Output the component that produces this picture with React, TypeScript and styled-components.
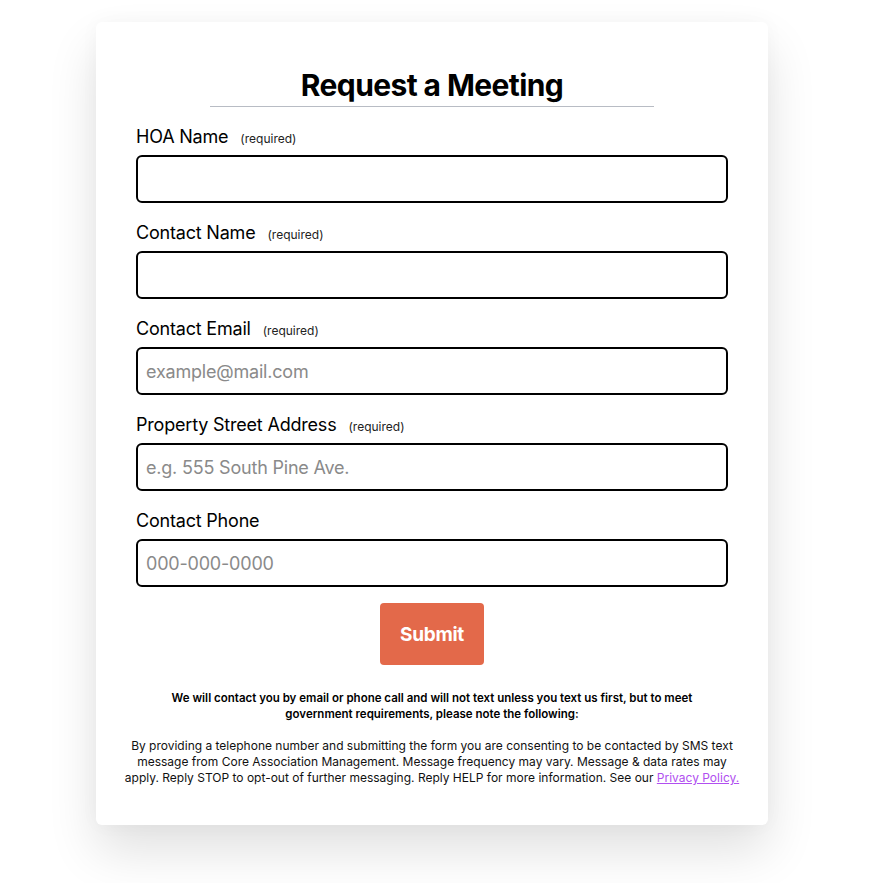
import React from "react";
import styled, { createGlobalStyle } from "styled-components";

const Global = createGlobalStyle`
  html, body { margin: 0; padding: 0; background: #ffffff; }
  body { font-family: Inter, "Noto Sans", Arial, sans-serif; color: #000; }
  * { box-sizing: border-box; }
`;

const Page = styled.div`
  min-height: 883px;
  padding: 22px 0 0 96px;
`;

const Card = styled.form`
  width: 672px;
  background: #fff;
  border-radius: 6px;
  box-shadow: 0 26px 50px rgba(0, 0, 0, 0.12), 0 0 20px rgba(0, 0, 0, 0.03);
  padding: 45px 40px 39px;
  display: flex;
  flex-direction: column;
`;

const Title = styled.h1`
  margin: 0 auto;
  width: 444px;
  font-size: 30px;
  line-height: 36px;
  font-weight: 700;
  letter-spacing: -0.6px;
  text-align: center;
  padding-bottom: 3px;
  border-bottom: 1px solid #b8bcc4;
`;

const Fields = styled.div`
  display: flex;
  flex-direction: column;
  gap: 18px;
  margin-top: 18px;
`;

const Field = styled.label`
  display: flex;
  flex-direction: column;
  gap: 6px;
`;

const LabelRow = styled.div`
  display: flex;
  align-items: baseline;
  gap: 12px;
  height: 24px;
  font-size: 18px;
  line-height: 24px;
  letter-spacing: -0.2px;
`;

const Req = styled.span`
  font-size: 12px;
  line-height: 1;
  letter-spacing: 0;
  color: #222;
`;

const Input = styled.input`
  width: 100%;
  height: 48px;
  border: 2px solid #000;
  border-radius: 6px;
  padding: 0 8px;
  font-family: inherit;
  font-size: 18px;
  letter-spacing: -0.2px;
  color: #000;
  background: #fff;
  outline: none;
  &::placeholder { color: #8a8a8a; }
`;

const Submit = styled.button`
  align-self: center;
  margin-top: 16px;
  width: 104px;
  height: 62px;
  border: none;
  border-radius: 4px;
  background: #e3694a;
  color: #fff;
  font-family: inherit;
  font-weight: 700;
  font-size: 19px;
  letter-spacing: -0.3px;
  cursor: pointer;
`;

const Notes = styled.div`
  margin: 25px -20px 0;
  display: flex;
  flex-direction: column;
  gap: 16px;
  text-align: center;
  line-height: 16px;
`;

const Bold = styled.p`
  margin: 0 auto;
  width: 560px;
  font-size: 11.5px;
  font-weight: 600;
`;

const Plain = styled.p`
  margin: 0 auto;
  width: 621px;
  font-size: 12px;
  color: #111;
`;

const Link = styled.a`
  color: #b14ff0;
  text-decoration: underline;
`;

const fields = [
  { label: "HOA Name", req: true, placeholder: "" },
  { label: "Contact Name", req: true, placeholder: "" },
  { label: "Contact Email", req: true, placeholder: "example@mail.com" },
  { label: "Property Street Address", req: true, placeholder: "e.g. 555 South Pine Ave." },
  { label: "Contact Phone", req: false, placeholder: "000-000-0000" },
];

export default function App() {
  return (
    <>
      <Global />
      <Page>
        <Card onSubmit={(e) => e.preventDefault()}>
          <Title>Request a Meeting</Title>
          <Fields>
            {fields.map((f) => (
              <Field key={f.label}>
                <LabelRow>
                  <span>{f.label}</span>
                  {f.req && <Req>(required)</Req>}
                </LabelRow>
                <Input placeholder={f.placeholder} />
              </Field>
            ))}
          </Fields>
          <Submit type="submit">Submit</Submit>
          <Notes>
            <Bold>
              We will contact you by email or phone call and will not text unless you text us first, but to meet
              government requirements, please note the following:
            </Bold>
            <Plain>
              By providing a telephone number and submitting the form you are consenting to be contacted by SMS text
              message from Core Association Management. Message frequency may vary. Message &amp; data rates may
              apply. Reply STOP to opt-out of further messaging. Reply HELP for more information. See our{" "}
              <Link href="#">Privacy Policy.</Link>
            </Plain>
          </Notes>
        </Card>
      </Page>
    </>
  );
}
